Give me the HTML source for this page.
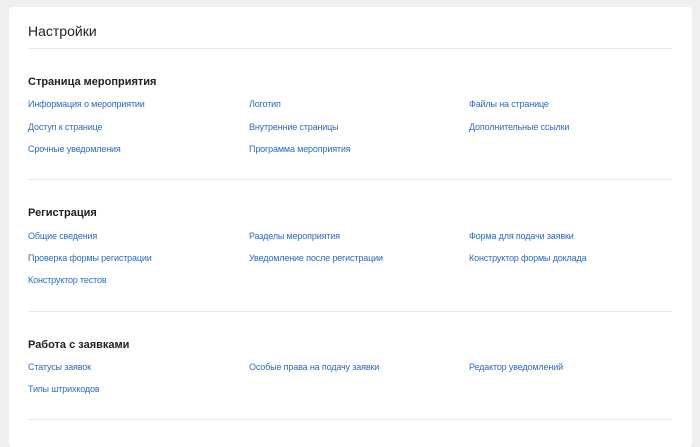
<!DOCTYPE html>
<html><head><meta charset="utf-8"><style>
body{margin:0;width:700px;height:434px;background:#efefef;font-family:"Liberation Sans",sans-serif;position:relative;overflow:hidden}
.card{position:absolute;left:9px;top:7px;width:683px;height:440px;background:#fff;border-radius:3px}
.t{position:absolute;left:28px;font-size:14px;color:#222;top:23px}
.hr{position:absolute;left:28px;width:644px;height:1px;background:#e6e6e6}
.h{position:absolute;left:28px;font-size:11px;font-weight:bold;color:#222}
.a{position:absolute;font-size:9px;color:#2b6bbf;white-space:nowrap;letter-spacing:-0.15px}
</style></head><body>
<div class="card"></div>
<div class="t">Настройки</div>
<div class="hr" style="top:48px"></div>
<div class="h" style="top:76px">Страница мероприятия</div>
<div class="a" style="left:28px;top:99px">Информация о мероприятии</div>
<div class="a" style="left:249px;top:99px">Логотип</div>
<div class="a" style="left:469px;top:99px">Файлы на странице</div>
<div class="a" style="left:28px;top:122px">Доступ к странице</div>
<div class="a" style="left:249px;top:122px">Внутренние страницы</div>
<div class="a" style="left:469px;top:122px">Дополнительные ссылки</div>
<div class="a" style="left:28px;top:144px">Срочные уведомления</div>
<div class="a" style="left:249px;top:144px">Программа мероприятия</div>
<div class="hr" style="top:179px"></div>
<div class="h" style="top:207px">Регистрация</div>
<div class="a" style="left:28px;top:231px">Общие сведения</div>
<div class="a" style="left:249px;top:231px">Разделы мероприятия</div>
<div class="a" style="left:469px;top:231px">Форма для подачи заявки</div>
<div class="a" style="left:28px;top:253px">Проверка формы регистрации</div>
<div class="a" style="left:249px;top:253px">Уведомление после регистрации</div>
<div class="a" style="left:469px;top:253px">Конструктор формы доклада</div>
<div class="a" style="left:28px;top:275px">Конструктор тестов</div>
<div class="hr" style="top:311px"></div>
<div class="h" style="top:339px">Работа с заявками</div>
<div class="a" style="left:28px;top:362px">Статусы заявок</div>
<div class="a" style="left:249px;top:362px">Особые права на подачу заявки</div>
<div class="a" style="left:469px;top:362px">Редактор уведомлений</div>
<div class="a" style="left:28px;top:384px">Типы штрихкодов</div>
<div class="hr" style="top:419px"></div>
</body></html>
